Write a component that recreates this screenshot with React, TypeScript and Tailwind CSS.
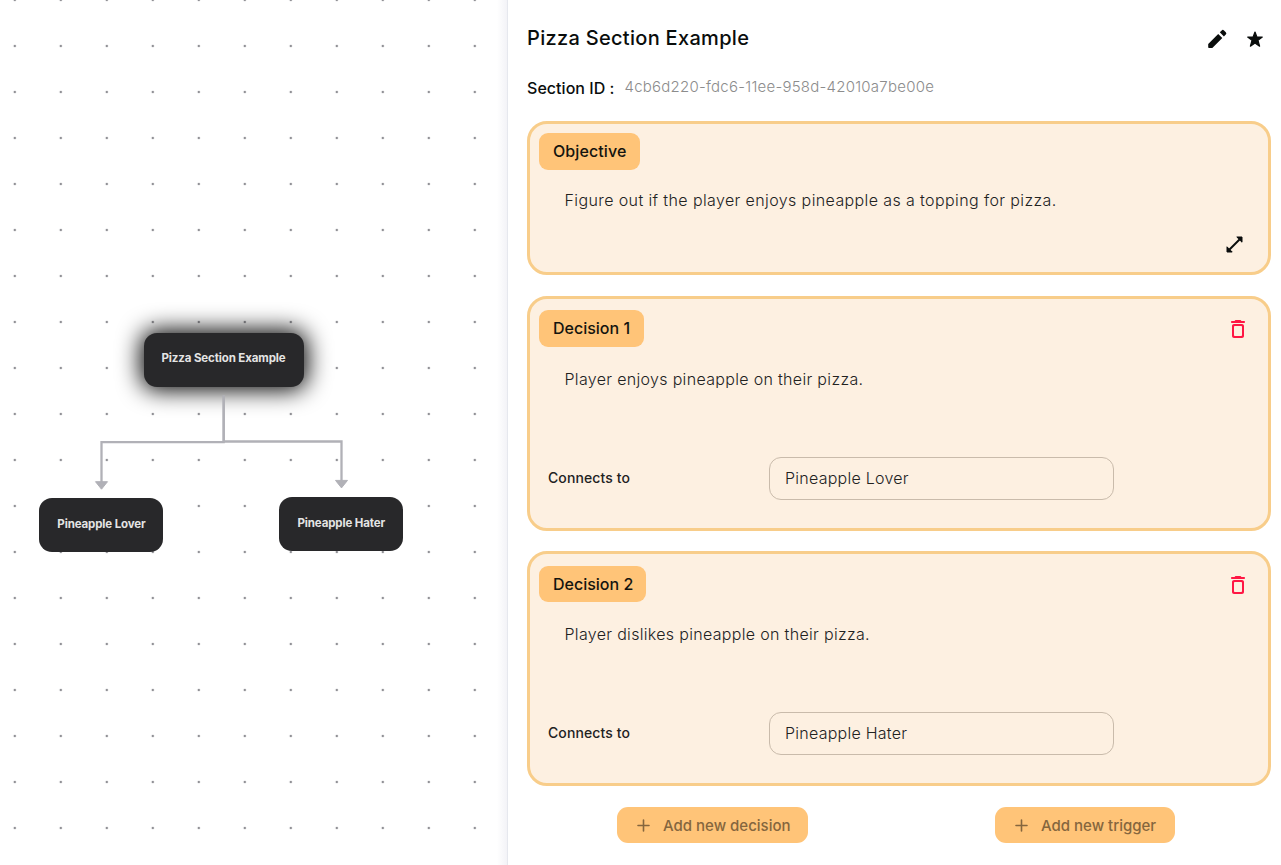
import type { ReactNode } from 'react';

function PencilIcon() {
  return (
    <svg viewBox="0 0 24 24" className="h-6 w-6 fill-[#0a0d0c]">
      <path d="M3.2 16.9v3.3c0 .5.3.8.8.8h3.3l10-10-4.1-4.1zM20.3 8l.5-.5a1.6 1.6 0 0 0 0-2.3l-1.8-1.8a1.6 1.6 0 0 0-2.3 0l-1.9 1.9 4.1 4.1z" />
    </svg>
  );
}

function StarIcon() {
  return (
    <svg viewBox="0 0 24 24" className="h-6 w-6 fill-[#0a0d0c] stroke-[#0a0d0c]" strokeWidth="1.2" strokeLinejoin="round">
      <path d="M12 5l1.9 5h5.4l-4.3 3.3 1.6 5.9L12 15.9l-4.6 3.3L9 13.3 4.7 10h5.4z" />
    </svg>
  );
}

function ExpandIcon() {
  return (
    <svg viewBox="0 0 21 21" className="h-[21px] w-[21px] fill-[#0a0d0c] stroke-[#0a0d0c]" strokeLinejoin="round">
      <path d="M5.5 15.5l10-10" strokeWidth="2" />
      <path d="M12.8 3H18v5.2zM8.2 18H3v-5.2z" strokeWidth="1" />
    </svg>
  );
}

function TrashIcon() {
  return (
    <svg viewBox="0 0 24 24" className="h-6 w-6 fill-[#ff1744]">
      <path d="M6 19c0 1.1.9 2 2 2h8c1.1 0 2-.9 2-2V9c0-1.1-.9-2-2-2H8c-1.1 0-2 .9-2 2v10zM9 9h6c.55 0 1 .45 1 1v8c0 .55-.45 1-1 1H9c-.55 0-1-.45-1-1v-8c0-.55.45-1 1-1zm6.5-5l-.71-.71c-.18-.18-.44-.29-.7-.29H9.91c-.26 0-.52.11-.7.29L8.5 4H6c-.55 0-1 .45-1 1s.45 1 1 1h12c.55 0 1-.45 1-1s-.45-1-1-1h-2.5z" />
    </svg>
  );
}

function PlusIcon() {
  return (
    <svg viewBox="0 0 20 20" className="h-5 w-5 fill-none stroke-[#85663e]" strokeWidth="1.6" strokeLinecap="round">
      <path d="M10.5 5v11M5 10.5h11" />
    </svg>
  );
}

function Chip({ children, className }: { children: ReactNode; className: string }) {
  return (
    <span className={`flex items-center rounded-[9px] bg-[#ffc478] pl-[14px] text-base font-medium whitespace-nowrap text-[#14140f] ${className}`}>
      {children}
    </span>
  );
}

interface DecisionProps {
  title: string;
  text: string;
  target: string;
  className: string;
  chipClass: string;
}

function Decision({ title, text, target, className, chipClass }: DecisionProps) {
  return (
    <section className={`flex h-[235px] flex-col rounded-[20px] border-3 border-[#f8cd8a] bg-[#fdf0e1] ${className}`}>
      <div className="flex items-start justify-between pr-[18px] pl-[9px]">
        <Chip className={chipClass}>{title}</Chip>
        <button aria-label={`Delete ${title}`} className="mt-[6.5px]">
          <TrashIcon />
        </button>
      </div>
      <p className="mt-5 pl-[34.5px] text-base font-light tracking-[0.32px] text-[#22221f]">{text}</p>
      <div className="mt-auto mb-7 flex items-center pl-[18px]">
        <span className="w-[221px] pb-px text-sm font-medium tracking-[0.1px] text-[#22221f]">Connects to</span>
        <div className="flex h-[43px] w-[345px] items-center rounded-[12px] border border-[#c9bbab] px-[15px] pb-px text-base font-light tracking-[0.25px] text-[#22221f]">
          {target}
        </div>
      </div>
    </section>
  );
}

function AddButton({ children, className }: { children: ReactNode; className: string }) {
  return (
    <button className={`flex h-9 items-center rounded-[11px] bg-[#ffc478] pl-4 text-[15px] font-medium whitespace-nowrap text-[#85663e] ${className}`}>
      <PlusIcon />
      <span className="mt-[2px] ml-[10px]">{children}</span>
    </button>
  );
}

function GraphNode({ label, className }: { label: string; className: string }) {
  return (
    <div className={`absolute flex h-[54px] items-center justify-center rounded-[13px] bg-[#28282a] text-[11.5px] font-bold tracking-[-0.12px] whitespace-nowrap text-[#e4e4e4] ${className}`}>
      {label}
    </div>
  );
}

function Canvas() {
  return (
    <div className="relative h-full w-[508px] overflow-hidden">
      <svg className="absolute inset-0 h-full w-full">
        <defs>
          <pattern id="dots" x="-8.2" y="-23" width="46" height="46" patternUnits="userSpaceOnUse">
            <circle cx="23" cy="23" r="1.25" fill="#919196" />
          </pattern>
        </defs>
        <rect width="508" height="865" fill="url(#dots)" />
      </svg>
      <GraphNode label="Pizza Section Example" className="top-[332.5px] left-[143.5px] w-[160px] pb-px shadow-[0_0_23px_3px_#000000]" />
      <svg className="absolute inset-0 h-full w-full">
        <g fill="none" stroke="#b1b1b7" strokeWidth="2.3">
          <path d="M223.7 395.5V442.2H101.5v41" />
          <path d="M223.7 395.5V441.5H341.5V481" />
        </g>
        <g fill="#b1b1b7" stroke="#b1b1b7" strokeLinejoin="round">
          <path d="M95.5 481.7h12l-6 7.5z" />
          <path d="M335.5 480.4h12l-6 7.5z" />
        </g>
      </svg>
      <GraphNode label="Pineapple Lover" className="top-[498px] left-[39px] w-[124px] pb-px pl-px" />
      <GraphNode label="Pineapple Hater" className="top-[497px] left-[279.3px] w-[124px]" />
      <div className="absolute inset-y-0 right-0 w-[11px] border-r border-[#e6e8ee] bg-linear-to-r from-transparent to-[#f3f3f7]" />
    </div>
  );
}

export default function App() {
  return (
    <main className="flex h-[865px] w-[1281px] overflow-hidden bg-white font-['Inter',sans-serif]">
      <Canvas />
      <div className="flex flex-1 flex-col pr-[10px] pl-[19px]">
        <header className="flex h-[53px] items-end justify-between pr-1">
          <h1 className="text-xl leading-[30px] font-medium tracking-[0.3px] text-[#0a0d0c]">Pizza Section Example</h1>
          <div className="flex gap-[14px] pb-[2.5px]">
            <button aria-label="Edit section">
              <PencilIcon />
            </button>
            <button aria-label="Favourite section">
              <StarIcon />
            </button>
          </div>
        </header>
        <div className="flex h-[68px] pt-[22px]">
          <span className="mt-px text-base font-medium tracking-[0.04px] text-[#0a0d0c]">Section ID :</span>
          <span className="ml-[10px] text-[15px] leading-[23px] font-light tracking-[0.24px] text-[#8c8c8c]">
            4cb6d220-fdc6-11ee-958d-42010a7be00e
          </span>
        </div>
        <section className="flex h-[154px] flex-col rounded-[20px] border-3 border-[#f8cd8a] bg-[#fdf0e1] pt-[9px]">
          <div className="flex pl-[9px]">
            <Chip className="h-[37px] w-[101px] pb-px tracking-[0.1px]">Objective</Chip>
          </div>
          <p className="mt-[18px] pl-[34.5px] text-base font-light tracking-[0.39px] text-[#22221f]">
            Figure out if the player enjoys pineapple as a topping for pizza.
          </p>
          <div className="mt-[22px] flex justify-end pr-[23px]">
            <button aria-label="Expand objective">
              <ExpandIcon />
            </button>
          </div>
        </section>
        <Decision
          title="Decision 1"
          text="Player enjoys pineapple on their pizza."
          target="Pineapple Lover"
          className="mt-[21px] pt-[11px]"
          chipClass="h-[37px] w-[105px] pb-px"
        />
        <Decision
          title="Decision 2"
          text="Player dislikes pineapple on their pizza."
          target="Pineapple Hater"
          className="mt-5 pt-3"
          chipClass="h-9 w-[107px]"
        />
        <div className="mt-[21px] flex pl-[90px]">
          <AddButton className="w-[191px]">Add new decision</AddButton>
          <AddButton className="ml-[187px] w-[180px]">Add new trigger</AddButton>
        </div>
      </div>
    </main>
  );
}
